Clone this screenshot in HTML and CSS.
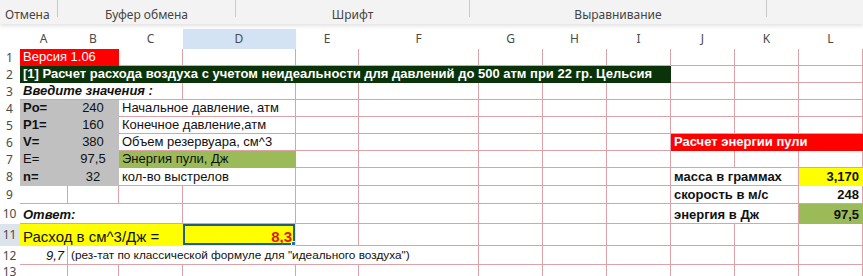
FILE: index.html
```html
<!DOCTYPE html>
<html lang="ru">
<head>
  <meta charset="UTF-8">
  <title>Расчет расхода воздуха</title>
  <link rel="stylesheet" href="styles.css">
</head>
<body>
  <div class="ribbon">
    <div class="group g-undo"><span>Отмена</span></div>
    <div class="group g-clip"><span>Буфер обмена</span></div>
    <div class="group g-font"><span>Шрифт</span></div>
    <div class="group g-align"><span>Выравнивание</span></div>
    <div class="group g-rest"></div>
  </div>

  <table class="sheet">
    <colgroup>
      <col class="c-gut"><col class="c-a"><col class="c-b"><col class="c-c"><col class="c-d"><col class="c-e">
      <col class="c-f"><col class="c-g"><col class="c-h"><col class="c-i"><col class="c-j"><col class="c-k"><col class="c-l">
    </colgroup>
    <tr class="hdr">
      <th></th><th>A</th><th>B</th><th>C</th><th class="sel">D</th><th>E</th><th>F</th><th>G</th><th>H</th><th>I</th><th>J</th><th>K</th><th>L</th>
    </tr>
    <tr class="r17">
      <th>1</th>
      <td colspan="2" class="red">Версия 1.06</td>
      <td></td><td></td><td></td><td></td><td></td><td></td><td></td><td></td><td></td><td></td>
    </tr>
    <tr class="r17">
      <th>2</th>
      <td colspan="9" class="dark b">[1] Расчет расхода воздуха с учетом неидеальности для давлений до 500 атм при 22 гр. Цельсия</td>
      <td></td><td></td><td></td>
    </tr>
    <tr class="r17">
      <th>3</th>
      <td colspan="3" class="b i">Введите значения :</td>
      <td></td><td></td><td></td><td></td><td></td><td></td><td></td><td></td><td></td>
    </tr>
    <tr class="r17">
      <th>4</th>
      <td class="gray b">Po=</td><td class="gray ctr">240</td>
      <td colspan="2">Начальное давление, атм</td>
      <td></td><td></td><td></td><td></td><td></td><td></td><td></td><td></td>
    </tr>
    <tr class="r17">
      <th>5</th>
      <td class="gray b">P1=</td><td class="gray ctr">160</td>
      <td colspan="2">Конечное давление,атм</td>
      <td></td><td></td><td></td><td></td><td></td><td></td><td></td><td></td>
    </tr>
    <tr class="r17">
      <th>6</th>
      <td class="gray b">V=</td><td class="gray ctr">380</td>
      <td colspan="2">Объем резервуара, см^3</td>
      <td></td><td></td><td></td><td></td><td></td>
      <td colspan="3" class="red b">Расчет энергии пули</td>
    </tr>
    <tr class="r17">
      <th>7</th>
      <td class="gray">E=</td><td class="gray ctr">97,5</td>
      <td colspan="2" class="green">Энергия пули, Дж</td>
      <td></td><td></td><td></td><td></td><td></td><td></td><td></td><td></td>
    </tr>
    <tr class="r18">
      <th>8</th>
      <td class="gray b">n=</td><td class="gray ctr">32</td>
      <td colspan="2">кол-во выстрелов</td>
      <td></td><td></td><td></td><td></td><td></td>
      <td colspan="2" class="b">масса в граммах</td>
      <td class="yellow b num">3,170</td>
    </tr>
    <tr class="r18">
      <th>9</th>
      <td></td><td></td><td></td><td></td><td></td><td></td><td></td><td></td><td></td>
      <td colspan="2" class="b">скорость в м/с</td>
      <td class="b num">248</td>
    </tr>
    <tr class="r20">
      <th>10</th>
      <td colspan="3" class="b i">Ответ:</td>
      <td></td><td></td><td></td><td></td><td></td><td></td>
      <td colspan="2" class="b">энергия в Дж</td>
      <td class="green b num">97,5</td>
    </tr>
    <tr class="r22">
      <th class="sel">11</th>
      <td colspan="3" class="yellow big">Расход в см^3/Дж =</td>
      <td class="yellow b num result active">8,3</td>
      <td></td><td></td><td></td><td></td><td></td><td></td><td></td><td></td>
    </tr>
    <tr class="r19">
      <th>12</th>
      <td class="i num">9,7</td>
      <td colspan="5" class="note">(рез-тат по классической формуле для "идеального воздуха")</td>
      <td></td><td></td><td></td><td></td><td></td><td></td>
    </tr>
    <tr class="r17 last">
      <th>13</th>
      <td></td><td></td><td></td><td></td><td></td><td></td><td></td><td></td><td></td><td></td><td></td><td></td>
    </tr>
  </table>
</body>
</html>
```

FILE: styles.css
```css
:root {
  --grid: #dca2a8;
  --head-text: #4a4a4a;
  --ribbon-bg: #f3f3f3;
  --red: #ff0000;
  --dark: #0a330a;
  --gray: #c0c0c0;
  --green: #9bbb59;
  --yellow: #ffff00;
  --select: #1f5e82;
}

* {
  margin: 0;
  padding: 0;
  box-sizing: border-box;
}

body {
  width: 863px;
  height: 276px;
  overflow: hidden;
  background: #fff;
  font-family: "Liberation Sans", Arial, sans-serif;
  color: #111;
}

/* ribbon strip */
.ribbon {
  height: 24px;
  display: flex;
  background: var(--ribbon-bg);
  box-shadow: 0 2px 4px rgba(0,0,0,0.12);
  margin-bottom: 5px;
  font-family: "Noto Sans", "Open Sans", sans-serif;
  font-size: 12px;
  color: #444;
}
.group {
  height: 17px;
  border-right: 1px solid #c9c9c9;
  text-align: center;
  white-space: nowrap;
}
.group span {
  display: block;
  padding-top: 6px;
  line-height: 17px;
}
.g-undo { width: 58px; text-align: left; padding-left: 5px; }
.g-clip { width: 178px; }
.g-font { width: 234px; }
.g-align { width: 297px; }
.g-rest { flex: 1; border-right: none; }

/* sheet */
.sheet {
  width: 863px;
  table-layout: fixed;
  border-collapse: separate;
  border-spacing: 0;
  font-size: 13px;
}
.c-gut { width: 20px; }
.c-a { width: 48px; }
.c-b { width: 51px; }
.c-c { width: 64px; }
.c-d { width: 113px; }
.c-e { width: 63px; }
.c-f { width: 120px; }
.c-g, .c-h, .c-i, .c-j, .c-k, .c-l { width: 64px; }

.sheet th {
  font-family: "Noto Sans", "Open Sans", sans-serif;
  font-weight: normal;
  font-size: 12px;
  line-height: 14px;
  color: var(--head-text);
  text-align: center;
  padding: 0 1px 0 0;
}
.sheet th.sel { background: #dde3ea; }
.hdr { height: 20px; }
.hdr th.sel { background: #d3e3f4; }
.last th { padding-bottom: 5px; }

.sheet td {
  border-right: 1px solid var(--grid);
  border-bottom: 1px solid var(--grid);
  padding: 0 3px 1px;
  vertical-align: bottom;
  white-space: nowrap;
  overflow: hidden;
  line-height: 15px;
}

.r17 { height: 17px; }
.r18 { height: 18px; }
.r19 { height: 19px; }
.r20 { height: 20px; }
.r22 { height: 22px; }

.b { font-weight: bold; }
.i { font-style: italic; }
.ctr { text-align: center; }
.num { text-align: right; }

.sheet td.red { background: var(--red); border-color: var(--red); color: #fff; }
.sheet td.dark { background: var(--dark); border-color: var(--dark); color: #fff; }
.sheet td.gray { background: var(--gray); border-color: var(--gray); }
.sheet td.green { background: var(--green); border-color: var(--green); }
.sheet td.yellow { background: var(--yellow); border-color: var(--yellow); }

.big { font-size: 15px; line-height: 19px; }
.result { color: #e3140f; font-size: 15px; padding-right: 4px; }
.note { font-size: 11.8px; padding-left: 4px; }

.active {
  position: relative;
  box-shadow: inset 0 0 0 2px var(--select);
}
.active::after {
  content: "";
  position: absolute;
  right: -4px;
  bottom: -4px;
  width: 6px;
  height: 6px;
  background: #1f6fb8;
  border: 1px solid #fff;
}
```
